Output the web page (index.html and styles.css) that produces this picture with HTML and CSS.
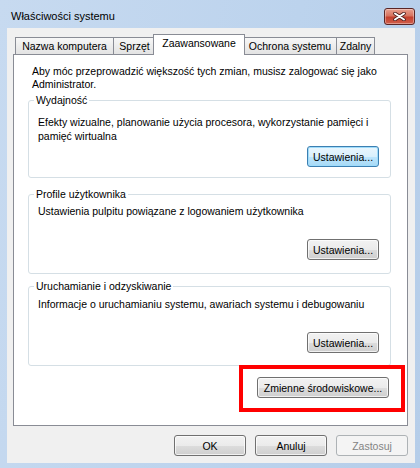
FILE: index.html
```html
<!DOCTYPE html>
<html>
<head>
  <title>Właściwości systemu</title>
  <meta name="viewport" content="width=device-width, initial-scale=1.0">
  <link rel="stylesheet" href="styles.css">
</head>
<body>
  <div class="window">
    <div class="titlebar">
      <span class="title">Właściwości systemu</span>
      <div class="close">
        <svg width="13" height="9" viewBox="0 0 13 9">
          <path d="M2 1.5 L11 7.5 M11 1.5 L2 7.5" stroke="#4a1e1e" stroke-width="3.6" stroke-linecap="round"/>
          <path d="M2 1.5 L11 7.5 M11 1.5 L2 7.5" stroke="#fff" stroke-width="2" stroke-linecap="round"/>
        </svg>
      </div>
    </div>

    <div class="client">
      <div class="tabs">
        <div class="tab tab-name">Nazwa komputera</div>
        <div class="tab tab-hw">Sprzęt</div>
        <div class="tab tab-adv active">Zaawansowane</div>
        <div class="tab tab-prot">Ochrona systemu</div>
        <div class="tab tab-remote">Zdalny</div>
      </div>

      <div class="panel">
        <p class="intro">Aby móc przeprowadzić większość tych zmian, musisz zalogować się jako<br>Administrator.</p>

        <fieldset class="group perf">
          <legend>Wydajność</legend>
          <p>Efekty wizualne, planowanie użycia procesora, wykorzystanie pamięci i<br>pamięć wirtualna</p>
          <div class="group-actions"><button class="btn default">Ustawienia...</button></div>
        </fieldset>

        <fieldset class="group profiles">
          <legend>Profile użytkownika</legend>
          <p>Ustawienia pulpitu powiązane z logowaniem użytkownika</p>
          <div class="group-actions"><button class="btn">Ustawienia...</button></div>
        </fieldset>

        <fieldset class="group startup">
          <legend>Uruchamianie i odzyskiwanie</legend>
          <p>Informacje o uruchamianiu systemu, awariach systemu i debugowaniu</p>
          <div class="group-actions"><button class="btn">Ustawienia...</button></div>
        </fieldset>

        <div class="env-row">
          <div class="highlight">
            <button class="btn env">Zmienne środowiskowe...</button>
          </div>
        </div>
      </div>

      <div class="dialog-buttons">
        <button class="btn">OK</button>
        <button class="btn">Anuluj</button>
        <button class="btn" disabled>Zastosuj</button>
      </div>
    </div>
  </div>
</body>
</html>
```

FILE: styles.css
```css
* {
  box-sizing: border-box;
}

body {
  margin: 0;
  width: 420px;
  height: 468px;
  overflow: hidden;
  font-family: "Liberation Sans", Arial, sans-serif;
  font-size: 10.5px;
  color: #000;
}

.window {
  height: 468px;
  background: linear-gradient(100deg, #c7daf0, #bcd3ed 60%, #b5cde9);
  padding: 0 5px 5px 7px;
  display: flex;
  flex-direction: column;
}

.titlebar {
  height: 28px;
  display: flex;
  align-items: flex-start;
  justify-content: space-between;
}

.title {
  margin: 9px 0 0 4px;
  font-size: 11px;
  line-height: 14px;
  color: #000;
}

.close {
  margin-top: 8px;
  width: 31px;
  height: 17px;
  border: 1px solid #5a2626;
  border-radius: 3px;
  background: linear-gradient(#e8a08f, #d7735f 45%, #c4402e 55%, #d0604c);
  box-shadow: inset 0 0 0 1px rgba(255, 255, 255, 0.35);
  display: flex;
  align-items: center;
  justify-content: center;
}

.client {
  flex: 1;
  background: #f0f0f0;
  padding: 7px 7px 0 6px;
  display: flex;
  flex-direction: column;
}

.tabs {
  display: flex;
  align-items: flex-end;
  height: 20px;
  padding-left: 2px;
}

.tab {
  height: 18px;
  line-height: 17px;
  margin-right: -1px;
  border: 1px solid #898c95;
  border-bottom: none;
  background: linear-gradient(#f7f7f7, #ececec 50%, #e2e2e2);
  text-align: center;
  white-space: nowrap;
}

.tab-name { width: 99px; }
.tab-hw { width: 43px; }
.tab-adv { width: 92px; }
.tab-prot { width: 94px; }
.tab-remote { width: 39px; }

.tab.active {
  position: relative;
  z-index: 2;
  height: 21px;
  line-height: 16px;
  margin: 0 -2px 0 -2px;
  background: #fff;
}

.panel {
  position: relative;
  z-index: 1;
  flex: 1;
  margin-top: -1px;
  background: #fff;
  border: 1px solid #898c95;
  padding: 10px 2px 0 14px;
  display: flex;
  flex-direction: column;
}

p {
  margin: 0;
  line-height: 13px;
  white-space: nowrap;
}

.intro {
  margin-left: 4px;
}

.group {
  margin: 0 14px 0 0;
  padding: 0 11px 10px 9px;
  border: 1px solid #d5dfe5;
  border-radius: 3px;
  min-width: 0;
}

.group legend {
  padding: 0 2px;
  margin-left: -4px;
  line-height: 13px;
}

.group-actions {
  display: flex;
  justify-content: flex-end;
}

.perf {
  margin-top: 3px;
}

.perf p {
  margin-top: 8px;
  line-height: 14px;
}

.perf .group-actions {
  margin-top: 3px;
}

.profiles {
  margin-top: 10px;
  padding-bottom: 13px;
}

.profiles p {
  margin-top: 4px;
}

.profiles .group-actions,
.startup .group-actions {
  margin-top: 21px;
}

.startup {
  margin-top: 6px;
  padding-bottom: 12px;
}

.startup p {
  margin-top: 5px;
}

.btn {
  width: 72px;
  height: 21px;
  padding: 0;
  font-family: inherit;
  font-size: 10.5px;
  color: #000;
  border: 1px solid #707070;
  border-radius: 3px;
  background: linear-gradient(#f2f2f2, #ebebeb 50%, #dddddd 51%, #cfcfcf);
  box-shadow: inset 0 0 0 1px rgba(255, 255, 255, 0.7);
}

.btn.default {
  border-color: #3c7fb1;
  background: linear-gradient(#eaf6fd, #d9f0fc 50%, #bee6fd 51%, #a7d9f5);
  box-shadow: inset 0 0 0 1px #9fdcfb;
}

.btn:disabled {
  border-color: #adb2b5;
  background: #f4f4f4;
  color: #838383;
  box-shadow: none;
}

.env-row {
  display: flex;
  justify-content: flex-end;
  margin-top: -1px;
}

.highlight {
  border: 4px solid #ff0000;
  padding: 8px 12px 10px 14px;
}

.btn.env {
  width: 132px;
}

.dialog-buttons {
  display: flex;
  justify-content: flex-end;
  gap: 9px;
  padding: 9px 0 7px;
}
```
